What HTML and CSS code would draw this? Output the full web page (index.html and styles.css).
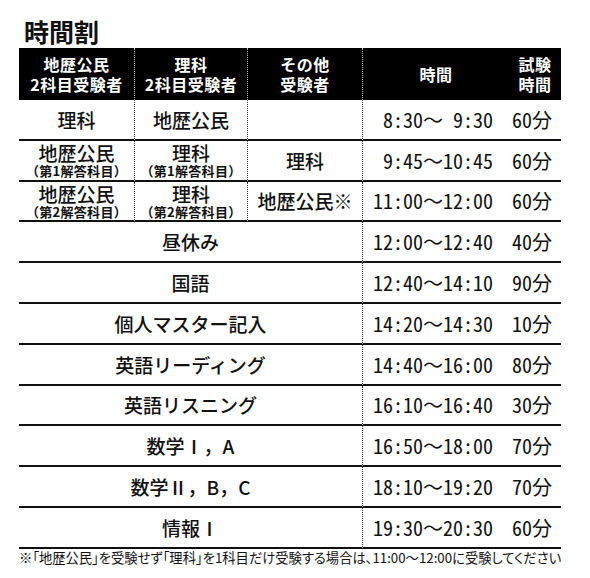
FILE: index.html
```html
<!DOCTYPE html>
<html lang="ja">
<head>
<meta charset="utf-8">
<title>時間割</title>
<link rel="stylesheet" href="styles.css">
</head>
<body>
<div class="page">
  <h1 class="title">時間割</h1>
  <div class="grid">
    <div class="th sep">地歴公民<br>2科目受験者</div>
    <div class="th sep">理科<br>2科目受験者</div>
    <div class="th sep">その他<br>受験者</div>
    <div class="th">時間</div>
    <div class="th">試験<br>時間</div>

    <div class="td sep subj">理科</div>
    <div class="td sep subj">地歴公民</div>
    <div class="td sep subj"></div>
    <div class="td time"><span class="n"> 8:30</span><span class="w">～</span><span class="n"> 9:30</span></div>
    <div class="td min"><span class="n">60</span>分</div>

    <div class="td sep subj two"><span class="l1">地歴公民</span><span class="l2">（第1解答科目）</span></div>
    <div class="td sep subj two"><span class="l1">理科</span><span class="l2">（第1解答科目）</span></div>
    <div class="td sep subj">理科</div>
    <div class="td time"><span class="n"> 9:45</span><span class="w">～</span><span class="n">10:45</span></div>
    <div class="td min"><span class="n">60</span>分</div>

    <div class="td sep subj two"><span class="l1">地歴公民</span><span class="l2">（第2解答科目）</span></div>
    <div class="td sep subj two"><span class="l1">理科</span><span class="l2">（第2解答科目）</span></div>
    <div class="td sep subj">地歴公民※</div>
    <div class="td time"><span class="n">11:00</span><span class="w">～</span><span class="n">12:00</span></div>
    <div class="td min"><span class="n">60</span>分</div>

    <div class="td sep subj span3">昼休み</div>
    <div class="td time"><span class="n">12:00</span><span class="w">～</span><span class="n">12:40</span></div>
    <div class="td min"><span class="n">40</span>分</div>

    <div class="td sep subj span3">国語</div>
    <div class="td time"><span class="n">12:40</span><span class="w">～</span><span class="n">14:10</span></div>
    <div class="td min"><span class="n">90</span>分</div>

    <div class="td sep subj span3">個人マスター記入</div>
    <div class="td time"><span class="n">14:20</span><span class="w">～</span><span class="n">14:30</span></div>
    <div class="td min"><span class="n">10</span>分</div>

    <div class="td sep subj span3">英語リーディング</div>
    <div class="td time"><span class="n">14:40</span><span class="w">～</span><span class="n">16:00</span></div>
    <div class="td min"><span class="n">80</span>分</div>

    <div class="td sep subj span3">英語リスニング</div>
    <div class="td time"><span class="n">16:10</span><span class="w">～</span><span class="n">16:40</span></div>
    <div class="td min"><span class="n">30</span>分</div>

    <div class="td sep subj span3">数学Ⅰ，A</div>
    <div class="td time"><span class="n">16:50</span><span class="w">～</span><span class="n">18:00</span></div>
    <div class="td min"><span class="n">70</span>分</div>

    <div class="td sep subj span3">数学Ⅱ，B，C</div>
    <div class="td time"><span class="n">18:10</span><span class="w">～</span><span class="n">19:20</span></div>
    <div class="td min"><span class="n">70</span>分</div>

    <div class="td sep subj span3">情報Ⅰ</div>
    <div class="td time"><span class="n">19:30</span><span class="w">～</span><span class="n">20:30</span></div>
    <div class="td min"><span class="n">60</span>分</div>
  </div>
  <p class="note">※「地歴公民」を受験せず「理科」を1科目だけ受験する場合は、11:00～12:00に受験してください</p>
</div>
</body>
</html>
```

FILE: styles.css
```css
html, body {
  margin: 0;
  padding: 0;
  background: #fff;
}
body {
  font-family: "Noto Sans CJK JP", "Noto Sans", sans-serif;
  color: #111;
}
.page {
  padding: 16px 0 0 19px;
  width: 542px;
}
.title {
  margin: 0 0 2px 5px;
  font-size: 25px;
  line-height: 30px;
  font-weight: 700;
}
.grid {
  display: grid;
  grid-template-columns: 116px 113px 115px 146px 52px;
  grid-template-rows: 52px repeat(11, 40.8px);
}
.th {
  background: #000;
  color: #fff;
  font-size: 16px;
  line-height: 20px;
  font-weight: 700;
  letter-spacing: 0.5px;
  display: flex;
  align-items: center;
  justify-content: center;
  text-align: center;
}
.th.sep {
  border-right: 1px dotted #bbb;
}
.td {
  box-sizing: border-box;
  border-bottom: 2px solid #111;
  display: flex;
  align-items: center;
}
.td.sep {
  border-right: 1px dotted #333;
}
.subj {
  justify-content: center;
  font-size: 19px;
  font-weight: 500;
  text-align: center;
}
.span3 {
  grid-column: span 3;
}
.two {
  flex-direction: column;
  justify-content: center;
}
.two .l1 {
  display: block;
  line-height: 21px;
}
.two .l2 {
  display: block;
  font-size: 13px;
  line-height: 15px;
  font-weight: 700;
  letter-spacing: 0.3px;
}
.time {
  white-space: pre;
  font-size: 20px;
  padding-left: 10px;
}
.n {
  font-feature-settings: "hwid" 1;
}
.min {
  justify-content: flex-end;
  padding-right: 9px;
  font-size: 20px;
}
.note {
  margin: 1px 0 0 0;
  font-size: 13.3px;
  line-height: 15px;
  white-space: nowrap;
  font-feature-settings: "palt" 1;
}
```
